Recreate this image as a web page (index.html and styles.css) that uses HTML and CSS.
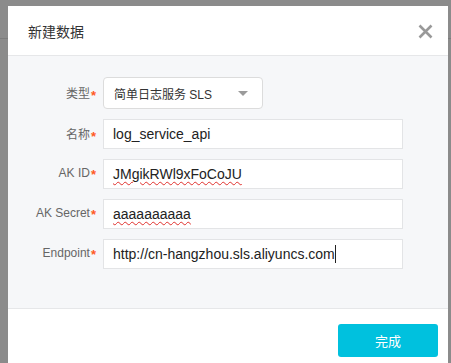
FILE: index.html
```html
<!DOCTYPE html>
<html lang="zh-CN">
<head>
    <meta charset="UTF-8">
    <meta name="viewport" content="width=device-width, initial-scale=1.0">
    <title>新建数据</title>
    <link rel="stylesheet" href="styles.css">
</head>
<body>
    <div class="dialog">
        <div class="dialog-header">
            <span class="dialog-title">新建数据</span>
            <button class="close-btn" aria-label="关闭">
                <svg width="15" height="15" viewBox="0 0 15 15">
                    <path d="M1.5 1.5 L13.5 13.5 M13.5 1.5 L1.5 13.5" stroke="#999" stroke-width="2.6" fill="none"/>
                </svg>
            </button>
        </div>

        <div class="dialog-body">
            <div class="form-row">
                <label class="form-label">类型<span class="req">*</span></label>
                <div class="select">
                    <span>简单日志服务 SLS</span>
                    <span class="caret"></span>
                </div>
            </div>
            <div class="form-row">
                <label class="form-label">名称<span class="req">*</span></label>
                <div class="field">log_service_api</div>
            </div>
            <div class="form-row">
                <label class="form-label">AK ID<span class="req">*</span></label>
                <div class="field"><span class="typo">JMgikRWl9xFoCoJU</span></div>
            </div>
            <div class="form-row">
                <label class="form-label">AK Secret<span class="req">*</span></label>
                <div class="field"><span class="typo">aaaaaaaaaa</span></div>
            </div>
            <div class="form-row">
                <label class="form-label">Endpoint<span class="req">*</span></label>
                <div class="field">http://cn-hangzhou.sls.aliyuncs.com<span class="cursor"></span></div>
            </div>
        </div>

        <div class="dialog-footer">
            <button class="btn-primary">完成</button>
        </div>
    </div>
</body>
</html>
```

FILE: styles.css
```css
body {
    margin: 0;
    padding: 6px 3px 0 8px;
    height: 363px;
    box-sizing: border-box;
    overflow: hidden;
    font-family: "Liberation Sans", "Noto Sans CJK SC", sans-serif;
    background-color: #8b8b8b;
    background-image: linear-gradient(#7c7c7c, #7c7c7c);
    background-size: 100% 1px;
    background-position: 0 38px;
    background-repeat: no-repeat;
}
.dialog {
    width: 440px;
    height: 357px;
    background-color: white;
    display: flex;
    flex-direction: column;
}
.dialog-header {
    height: 49px;
    border-bottom: 1px solid #e6e7e9;
    display: flex;
    align-items: center;
    justify-content: space-between;
    padding: 0 15px 0 20px;
}
.dialog-title {
    font-size: 14px;
    color: #333;
}
.close-btn {
    background: none;
    border: none;
    padding: 0;
    margin-top: 2px;
    cursor: pointer;
    display: flex;
}
.dialog-body {
    background-color: #f6f7f9;
    padding: 21px 45px 39px 0;
    display: flex;
    flex-direction: column;
    gap: 10px;
}
.form-row {
    display: flex;
    align-items: center;
}
.form-label {
    width: 95px;
    box-sizing: border-box;
    text-align: right;
    padding-right: 7px;
    font-size: 12px;
    color: #666;
    white-space: nowrap;
}
.req {
    display: inline-block;
    margin-left: 1px;
    color: #ff5a1f;
    font-size: 13px;
    font-weight: bold;
    vertical-align: -2px;
}
.select {
    width: 160px;
    height: 32px;
    box-sizing: border-box;
    border: 1px solid #dcdcdc;
    border-radius: 4px;
    background-color: white;
    display: flex;
    align-items: center;
    justify-content: space-between;
    padding: 0 14px 0 10px;
    font-size: 12px;
    color: #333;
}
.caret {
    width: 0;
    height: 0;
    border-left: 5px solid transparent;
    border-right: 5px solid transparent;
    border-top: 5px solid #9b9b9b;
}
.field {
    flex: 1;
    height: 30px;
    box-sizing: border-box;
    border: 1px solid #e3e4e6;
    background-color: white;
    display: flex;
    align-items: center;
    padding: 0 9px;
    font-size: 14px;
    color: #222;
}
.typo {
    text-decoration: underline wavy #e0302c;
    text-decoration-thickness: 1px;
    text-underline-offset: 2px;
}
.cursor {
    display: inline-block;
    width: 1px;
    height: 18px;
    background-color: #222;
}
.dialog-footer {
    flex: 1;
    border-top: 1px solid #e6e7e9;
    display: flex;
    justify-content: flex-end;
    align-items: flex-start;
    padding: 15px 10px 0 0;
}
.btn-primary {
    width: 100px;
    height: 33px;
    background-color: #00c1de;
    color: white;
    border: none;
    border-radius: 3px;
    font-size: 13px;
    font-family: "Liberation Sans", "Noto Sans CJK SC", sans-serif;
    cursor: pointer;
}
```
